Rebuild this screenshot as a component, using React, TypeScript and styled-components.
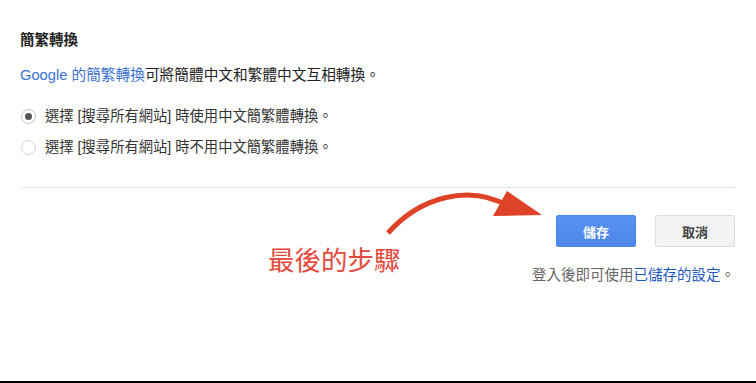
import React from 'react';
import styled, { createGlobalStyle } from 'styled-components';

const GlobalStyle = createGlobalStyle`
  html, body {
    margin: 0;
    padding: 0;
    background: #fff;
  }
  body {
    font-family: "Liberation Sans", "Noto Sans CJK TC", sans-serif;
  }
`;

const options = [
  { label: '選擇 [搜尋所有網站] 時使用中文簡繁體轉換。', checked: true },
  { label: '選擇 [搜尋所有網站] 時不用中文簡繁體轉換。', checked: false },
];

const App = () => {
  return (
    <>
      <GlobalStyle />
      <Page>
        <Title>簡繁轉換</Title>
        <Description>
          <Link href='#'>Google 的簡繁轉換</Link>可將簡體中文和繁體中文互相轉換。
        </Description>
        <RadioList>
          {options.map((opt, idx) => (
            <RadioRow key={idx}>
              <RadioCircle $checked={opt.checked} />
              <RadioLabel>{opt.label}</RadioLabel>
            </RadioRow>
          ))}
        </RadioList>
        <Divider />
        <ButtonRow>
          <PrimaryButton>儲存</PrimaryButton>
          <SecondaryButton>取消</SecondaryButton>
        </ButtonRow>
        <Footnote>
          登入後即可使用<FootLink href='#'>已儲存的設定</FootLink>。
        </Footnote>

        <Annotation>最後的步驟</Annotation>
        <Arrow width='170' height='50' viewBox='0 0 170 50'>
          <path
            d='M18 46 C 50 10, 100 -4, 140 20'
            fill='none'
            stroke='#df4327'
            strokeWidth='5'
          />
          <polygon points='137,4 172,28 123,29' fill='#df4327' />
        </Arrow>
      </Page>
    </>
  );
};

export default App;

const Page = styled.main`
  position: relative;
  box-sizing: border-box;
  height: 383px;
  padding: 30px 21px 0 20px;
  border-bottom: 2px solid #000;
  color: #222;
`;

const Title = styled.h2`
  margin: 0;
  font-size: 14.5px;
  line-height: 20px;
  font-weight: bold;
  color: #222;
`;

const Description = styled.p`
  margin: 15px 0 0;
  font-size: 14.7px;
  line-height: 20px;
  color: #222;
`;

const Link = styled.a`
  color: #3b72d6;
  text-decoration: none;
`;

const RadioList = styled.div`
  display: flex;
  flex-direction: column;
  gap: 11px;
  margin-top: 21px;
`;

const RadioRow = styled.label`
  display: flex;
  align-items: center;
  height: 20px;
`;

const RadioCircle = styled.span<{ $checked: boolean }>`
  box-sizing: border-box;
  width: 15px;
  height: 15px;
  margin-left: 1px;
  margin-right: 9px;
  border-radius: 50%;
  border: 1px solid ${(p) => (p.$checked ? '#c4c4c4' : '#d2d2d2')};
  background: #fff;
  display: flex;
  align-items: center;
  justify-content: center;
  &::after {
    content: '';
    display: ${(p) => (p.$checked ? 'block' : 'none')};
    width: 7px;
    height: 7px;
    border-radius: 50%;
    background: #555;
  }
`;

const RadioLabel = styled.span`
  font-size: 14.3px;
  line-height: 20px;
  color: #333;
`;

const Divider = styled.hr`
  margin: 30px 0 0;
  border: 0;
  border-top: 1px solid #e5e5e5;
  height: 0;
`;

const ButtonRow = styled.div`
  display: flex;
  justify-content: flex-end;
  gap: 19px;
  margin-top: 27px;
`;

const BaseButton = styled.button`
  box-sizing: border-box;
  width: 80px;
  height: 32px;
  border-radius: 2px;
  font-family: "Liberation Sans", "Noto Sans CJK TC", sans-serif;
  font-size: 13px;
  font-weight: bold;
  cursor: pointer;
`;

const PrimaryButton = styled(BaseButton)`
  border: 1px solid #4a84e8;
  background: linear-gradient(#5a92f2, #4c86ea);
  color: #fff;
`;

const SecondaryButton = styled(BaseButton)`
  border: 1px solid #dcdcdc;
  background: #f3f3f3;
  color: #444;
`;

const Footnote = styled.p`
  margin: 18px 0 0;
  text-align: right;
  font-size: 14.5px;
  line-height: 20px;
  color: #666;
`;

const FootLink = styled.a`
  color: #1f58c6;
  text-decoration: none;
`;

const Annotation = styled.div`
  position: absolute;
  left: 268px;
  top: 245px;
  font-size: 26.5px;
  line-height: 32px;
  color: #e4493c;
`;

const Arrow = styled.svg`
  position: absolute;
  left: 370px;
  top: 187px;
  overflow: visible;
`;
